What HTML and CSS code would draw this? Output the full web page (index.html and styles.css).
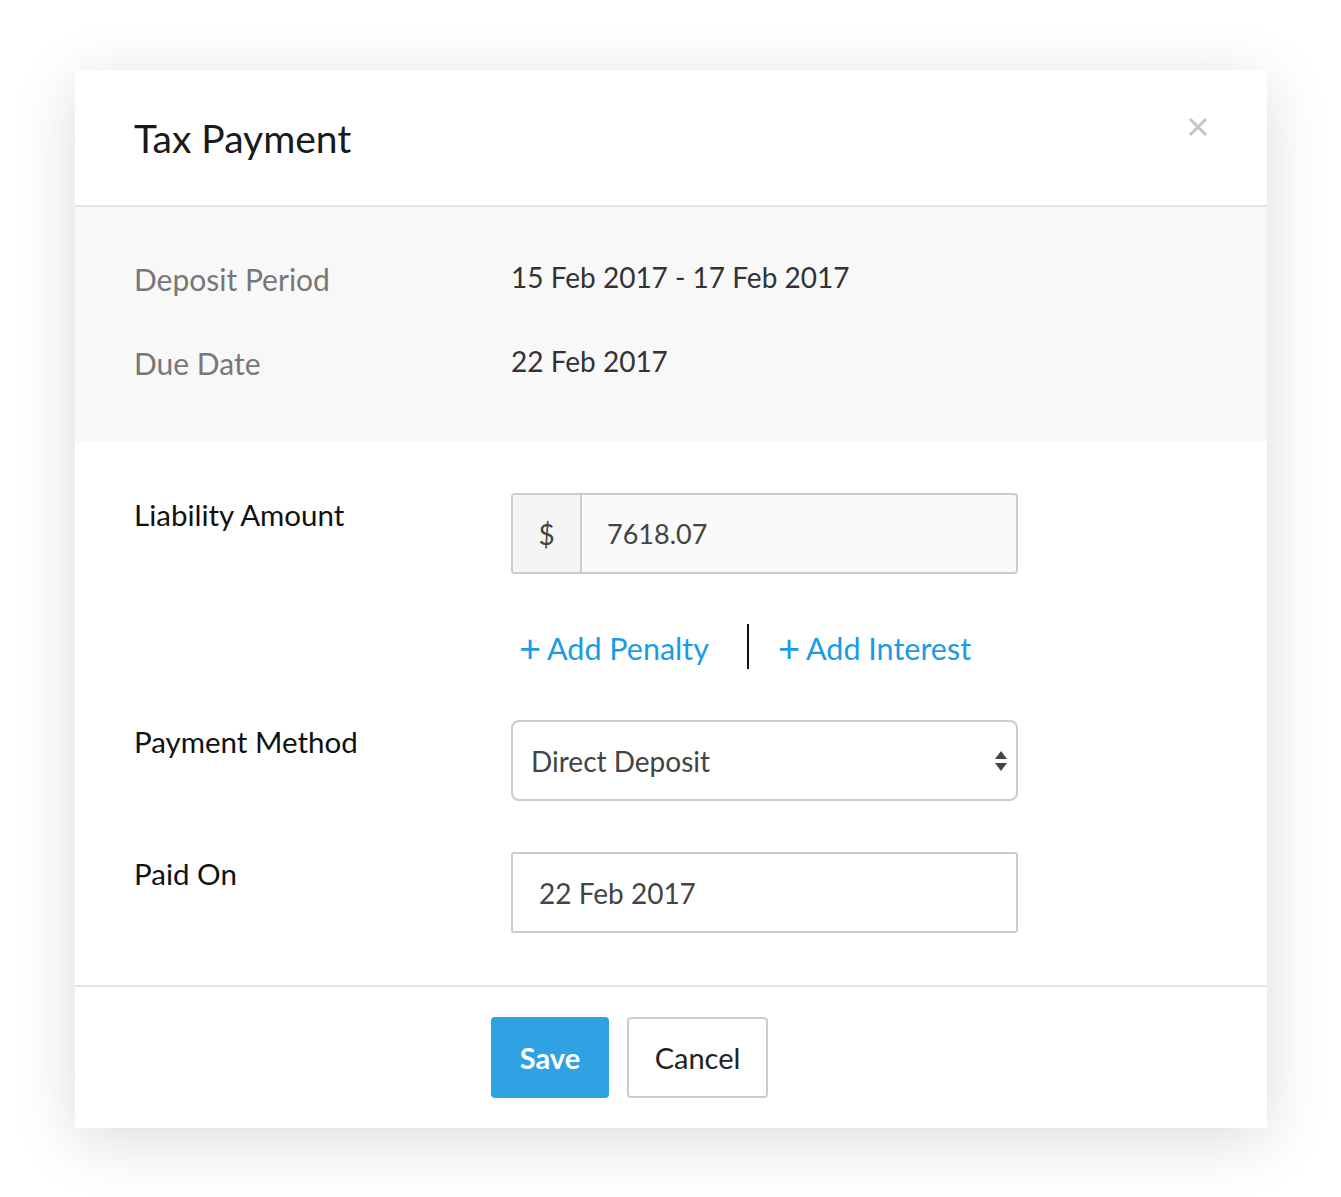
FILE: index.html
```html
<!DOCTYPE html>
<html lang="en">
<head>
  <meta charset="UTF-8" />
  <title>Tax Payment</title>
  <link rel="stylesheet" href="styles.css">
</head>
<body>
  <div class="modal">
    <!-- Header -->
    <div class="modal-header">
      <h1>Tax Payment</h1>
      <svg class="close" width="20" height="20" viewBox="0 0 20 20">
        <path d="M2 2 L18 18 M18 2 L2 18" stroke="#c4c4c4" stroke-width="3"/>
      </svg>
    </div>

    <!-- Summary -->
    <div class="summary">
      <div class="row">
        <span class="summary-label">Deposit Period</span>
        <span class="summary-value">15 Feb 2017 - 17 Feb 2017</span>
      </div>
      <div class="row">
        <span class="summary-label">Due Date</span>
        <span class="summary-value">22 Feb 2017</span>
      </div>
    </div>

    <!-- Form -->
    <div class="modal-body">
      <div class="form-row">
        <label>Liability Amount</label>
        <div class="input-group">
          <span class="prefix">$</span>
          <span class="amount">7618.07</span>
        </div>
      </div>

      <div class="form-row links-row">
        <span></span>
        <div class="links">
          <a href="#"><span class="plus">+</span>Add Penalty</a>
          <span class="divider"></span>
          <a href="#"><span class="plus">+</span>Add Interest</a>
        </div>
      </div>

      <div class="form-row">
        <label>Payment Method</label>
        <div class="select">
          <span>Direct Deposit</span>
          <svg class="arrows" width="14" height="28" viewBox="0 0 14 28">
            <path d="M7 4 L13 12 L1 12 Z" fill="#444"/>
            <path d="M1 16 L13 16 L7 24 Z" fill="#444"/>
          </svg>
        </div>
      </div>

      <div class="form-row">
        <label>Paid On</label>
        <div class="text-input">22 Feb 2017</div>
      </div>
    </div>

    <!-- Footer -->
    <div class="modal-footer">
      <button class="primary">Save</button>
      <button class="secondary">Cancel</button>
    </div>
  </div>
</body>
</html>
```

FILE: styles.css
```css
body {
  margin: 0;
  padding: 70px 74px 69px 75px;
  background-color: #fff;
  font-family: Lato, "Open Sans", sans-serif;
  color: #222;
}
.modal {
  width: 1192px;
  background: #fff;
  box-shadow: 0 12px 60px rgba(0, 0, 0, 0.14);
}
.modal-header {
  height: 135px;
  border-bottom: 2px solid #e5e5e5;
  display: flex;
  align-items: center;
  justify-content: space-between;
  padding: 0 59px 0 59px;
}
.modal-header h1 {
  margin: 0;
  font-size: 39px;
  font-weight: 400;
  color: #1a1a1a;
}
.close {
  margin-top: -22px;
}
.summary {
  background: #f8f8f8;
  padding: 30px 0 37px 59px;
}
.row {
  display: grid;
  grid-template-columns: 377px 1fr;
  height: 84px;
  align-items: center;
}
.summary-label {
  font-size: 30px;
  color: #777;
}
.summary-value {
  font-size: 28px;
  color: #333;
  margin-top: -4px;
}
.modal-body {
  padding: 51px 0 52px 59px;
  display: flex;
  flex-direction: column;
  gap: 51px;
}
.form-row {
  display: grid;
  grid-template-columns: 377px 507px;
  align-items: start;
}
.form-row label {
  font-size: 29.5px;
  color: #111;
  padding-top: 4px;
}
.input-group {
  display: flex;
  height: 81px;
  box-sizing: border-box;
  border: 2px solid #ccc;
  border-radius: 4px;
  background: #fafafa;
  font-size: 27px;
  color: #444;
}
.prefix {
  width: 67px;
  border-right: 2px solid #ccc;
  display: flex;
  align-items: center;
  justify-content: center;
  background: #f5f5f5;
  font-size: 28px;
}
.amount {
  display: flex;
  align-items: center;
  padding-left: 25px;
}
.links-row {
  margin-top: -1px;
}
.links {
  display: flex;
  align-items: center;
  height: 45px;
  padding-left: 8px;
}
.links a {
  color: #1a9be6;
  text-decoration: none;
  font-size: 30.5px;
}
.plus {
  font-size: 38px;
  margin-right: 6px;
  vertical-align: -2px;
}
.divider {
  width: 2px;
  height: 45px;
  background: #111;
  margin: 0 29px 0 38px;
}
.select {
  height: 81px;
  box-sizing: border-box;
  border: 2px solid #ccc;
  border-radius: 8px;
  display: flex;
  align-items: center;
  justify-content: space-between;
  padding: 0 8px 0 18px;
  font-size: 28px;
  color: #444;
}
.text-input {
  height: 81px;
  box-sizing: border-box;
  border: 2px solid #ccc;
  border-radius: 3px;
  display: flex;
  align-items: center;
  padding-left: 26px;
  font-size: 28px;
  color: #444;
}
.modal-footer {
  border-top: 2px solid #e5e5e5;
  padding: 30px 0 30px 416px;
  display: flex;
  gap: 18px;
}
button {
  height: 81px;
  border-radius: 4px;
  font-family: inherit;
  font-size: 29px;
  cursor: pointer;
}
button.primary {
  width: 118px;
  border: none;
  background-color: #2fa2e4;
  color: #fff;
  font-weight: 700;
}
button.secondary {
  width: 141px;
  border: 2px solid #ccc;
  background: #fff;
  color: #222;
}
```
